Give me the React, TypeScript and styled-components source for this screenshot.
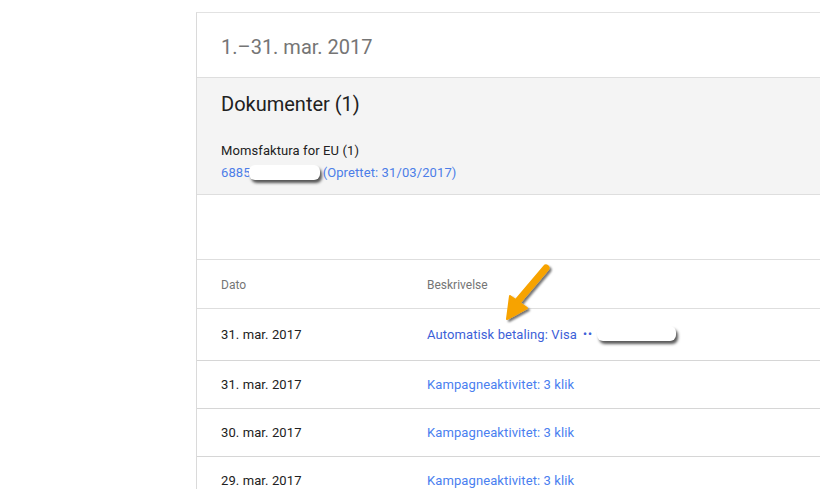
import { createGlobalStyle, styled } from "styled-components";

const Global = createGlobalStyle`
  html, body {
    margin: 0;
    background: #fff;
    overflow: hidden;
    font-family: Roboto, "Liberation Sans", Arial, sans-serif;
  }
`;

const Page = styled.div`
  padding: 12px 0 0 196px;
  height: 489px;
  box-sizing: border-box;
`;

const Card = styled.div`
  width: 700px;
  border-left: 1px solid #dadada;
  border-top: 1px solid #e2e2e2;
  position: relative;
`;

const Header = styled.div`
  height: 65px;
  box-sizing: border-box;
  display: flex;
  align-items: center;
  padding: 3px 0 0 24px;
  border-bottom: 1px solid #dedede;
  font-size: 20px;
  color: #757575;
`;

const Docs = styled.section`
  background: #f4f4f4;
  height: 117px;
  box-sizing: border-box;
  padding: 14px 24px 0;
  border-bottom: 1px solid #dedede;
`;

const DocsTitle = styled.h2`
  margin: 0;
  font-size: 20px;
  font-weight: 400;
  color: #212121;
  line-height: 24px;
`;

const DocName = styled.div`
  margin-top: 24px;
  font-size: 13px;
  color: #212121;
  line-height: 22px;
  letter-spacing: 0.1px;
`;

const DocLink = styled.a`
  display: block;
  font-size: 13px;
  line-height: 22px;
  letter-spacing: 0.1px;
  color: #4c7ee8;
  text-decoration: none;
`;

const Mask = styled.span<{ $w: number; $shift?: number }>`
  display: inline-block;
  vertical-align: middle;
  width: ${(p) => p.$w}px;
  height: 15px;
  margin-left: ${(p) => p.$shift ?? 0}px;
  margin-right: 3px;
  background: #fff;
  border-radius: 6px;
  box-shadow: 2px 3px 3px rgba(0, 0, 0, 0.65);
  position: relative;
  top: -1px;
`;

const Spacer = styled.div`
  height: 64px;
  border-bottom: 1px solid #dedede;
`;

const Row = styled.div<{ $h: number }>`
  display: grid;
  grid-template-columns: 206px 1fr;
  align-items: center;
  height: ${(p) => p.$h}px;
  box-sizing: border-box;
  padding-left: 24px;
  border-bottom: 1px solid #d6d6d6;
  font-size: 13px;
  letter-spacing: 0.1px;
  color: #212121;
`;

const HeadRow = styled(Row)`
  padding-top: 1px;
  font-size: 12px;
  letter-spacing: 0;
  color: #757575;
  border-bottom-color: #dedede;
`;

const Desc = styled.a<{ $dark?: boolean }>`
  color: ${(p) => (p.$dark ? "#3d5fd8" : "#4a80f0")};
  text-decoration: none;
  display: flex;
  align-items: center;
`;

const Dots = styled.span`
  margin: 0 4px 0 6px;
  letter-spacing: 1px;
  font-size: 11px;
  font-weight: 700;
`;

const Pointer = styled.svg`
  position: absolute;
  left: 306px;
  top: 238px;
`;

const rows = ["31. mar. 2017", "30. mar. 2017", "29. mar. 2017"];

export default function App() {
  return (
    <Page>
      <Global />
      <Card>
        <Header>1.–31. mar. 2017</Header>
        <Docs>
          <DocsTitle>Dokumenter (1)</DocsTitle>
          <DocName>Momsfaktura for EU (1)</DocName>
          <DocLink href="#">
            6885
            <Mask $w={71} $shift={-2} />
            (Oprettet: 31/03/2017)
          </DocLink>
        </Docs>
        <Spacer />
        <HeadRow $h={49}>
          <span>Dato</span>
          <span>Beskrivelse</span>
        </HeadRow>
        <Row $h={52}>
          <span>31. mar. 2017</span>
          <Desc href="#" $dark>
            Automatisk betaling: Visa
            <Dots>••</Dots>
            <Mask $w={79} />
          </Desc>
        </Row>
        {rows.map((date) => (
          <Row key={date} $h={48}>
            <span>{date}</span>
            <Desc href="#">Kampagneaktivitet: 3 klik</Desc>
          </Row>
        ))}
        <Pointer width="60" height="80" viewBox="0 0 60 80">
          <defs>
            <filter id="drop" x="-30%" y="-30%" width="160%" height="160%">
              <feDropShadow dx="2" dy="2" stdDeviation="1.2" floodColor="#000" floodOpacity="0.55" />
            </filter>
          </defs>
          <g filter="url(#drop)" fill="#f7a300">
            <path d="M43 17 L15 50" stroke="#f7a300" strokeWidth="7" strokeLinecap="round" />
            <path d="M4 68 L7 45 L24 57 Z" strokeLinejoin="round" stroke="#f7a300" strokeWidth="2" />
          </g>
        </Pointer>
      </Card>
    </Page>
  );
}
